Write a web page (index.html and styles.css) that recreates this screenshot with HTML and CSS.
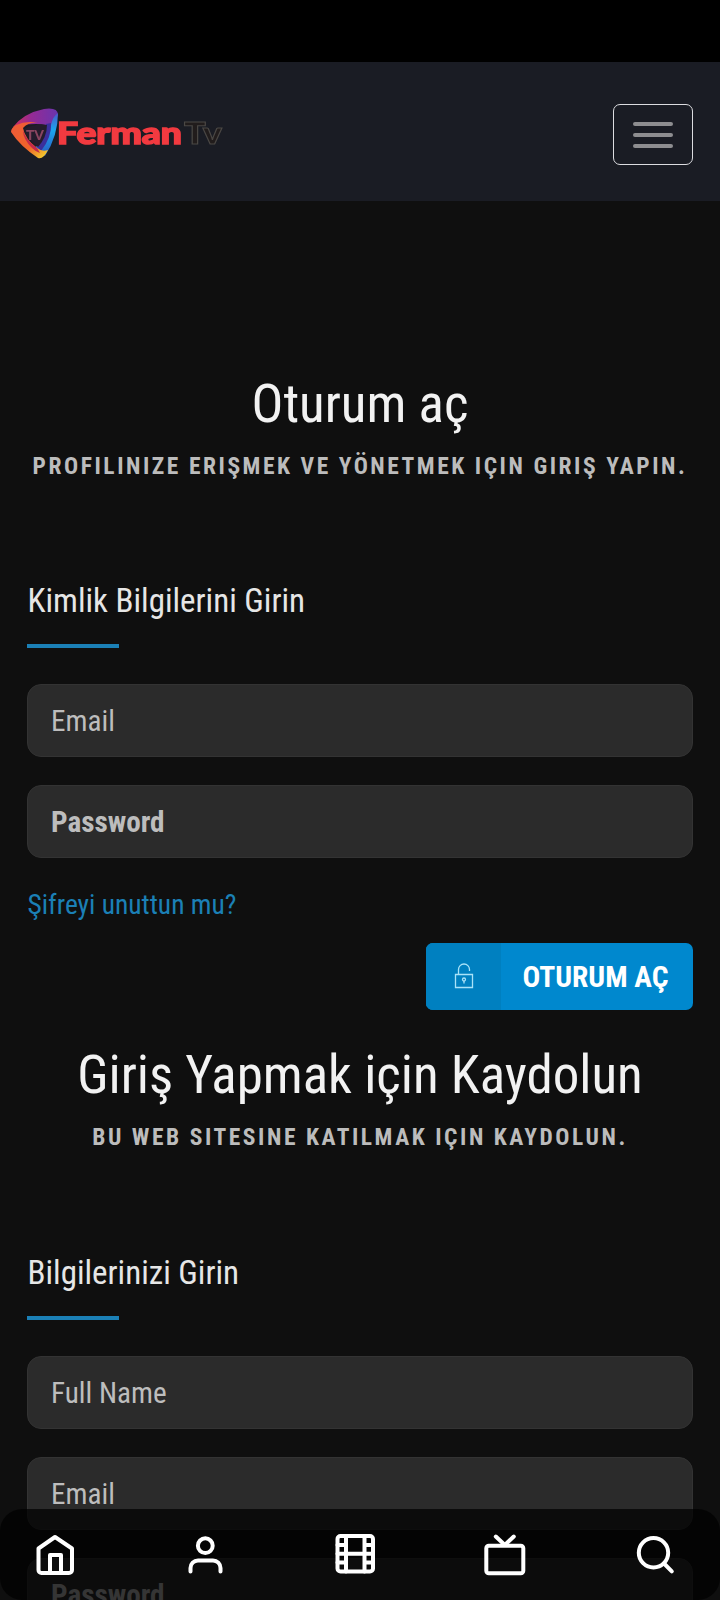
FILE: index.html
```html
<!DOCTYPE html>
<html lang="tr">
<head>
<meta charset="utf-8">
<title>FermanTv</title>
<link rel="stylesheet" href="styles.css">
</head>
<body>
<div class="screen">
  <div class="statusbar"></div>
  <header class="navbar">
    <a class="brand">
      <svg class="logo" width="216" height="56" viewBox="0 0 216 56">
        <defs>
          <linearGradient id="a" x1="0" y1="0" x2="1" y2="0"><stop offset="0" stop-color="#d0305a"/><stop offset=".4" stop-color="#952a94"/><stop offset="1" stop-color="#6a35ae"/></linearGradient>
          <linearGradient id="b" x1="0" y1="0" x2="0" y2="1"><stop offset="0" stop-color="#4b59c8"/><stop offset=".4" stop-color="#1ba5ee"/><stop offset="1" stop-color="#2a58c0"/></linearGradient>
          <linearGradient id="c" x1="0" y1="0" x2="1" y2="1"><stop offset="0" stop-color="#ee5a3a"/><stop offset=".6" stop-color="#f0642a"/><stop offset="1" stop-color="#f2e22e"/></linearGradient>
        </defs>
        <path d="M3 21Q14 7 34 3Q48 1 48 9L42 22Q38 18 26 18Q12 18 3 21Z" fill="url(#a)"/>
        <path d="M48 7Q48 30 35 50Q30 48 24 42Q38 34 41 19Q43 10 48 7Z" fill="url(#b)"/>
        <path d="M41 17Q42 31 31 45L27 41Q36 30 36 18Z" fill="#3b2f9c"/>
        <path d="M28 17Q18 16 13 22Q15 33 27 42Q32 46 38 44Q33 54 28 52Q10 40 1 26Q1 22 6 19Q17 14 28 17Z" fill="url(#c)"/>
        <path d="M13 24Q15 33 27 42L30 47Q26 46 22 42Q13 33 13 24Z" fill="#c32a4a"/>
        <path d="M14 23Q26 17 37 19Q37 31 28 41Q17 33 14 23Z" fill="#241c2c"/>
        <text class="logo-tv" x="16" y="34" textLength="18" lengthAdjust="spacingAndGlyphs">TV</text>
        <text class="logo-name" x="47" y="38" textLength="125" lengthAdjust="spacingAndGlyphs">Ferman</text>
        <text class="logo-suffix" x="174" y="38" textLength="38" lengthAdjust="spacingAndGlyphs">Tv</text>
      </svg>
    </a>
    <button class="toggler"><span></span><span></span><span></span></button>
  </header>
  <main class="content">
    <section class="panel">
      <h1 class="title">Oturum aç</h1>
      <p class="subtitle">PROFILINIZE ERIŞMEK VE YÖNETMEK IÇIN GIRIŞ YAPIN.</p>
      <h2 class="legend">Kimlik Bilgilerini Girin</h2>
      <div class="field">Email</div>
      <div class="field strong">Password</div>
      <div class="actions">
        <a class="forgot">Şifreyi unuttun mu?</a>
        <button class="submit">
          <span class="submit-icon">
            <svg width="20" height="26" viewBox="0 0 20 26" fill="none" stroke="#a9e2f8" stroke-width="1.3"><path d="M1.500 11.500h17v13h-17zM4.500 11V6.500a5.500 5.500 0 0 1 11 0v1.500"/><circle cx="10" cy="16.500" r="1.500"/><path d="M10 18v2.500"/></svg>
          </span>
          <span class="submit-label">OTURUM AÇ</span>
        </button>
      </div>
    </section>
    <section class="panel signup">
      <h1 class="title">Giriş Yapmak için Kaydolun</h1>
      <p class="subtitle">BU WEB SITESINE KATILMAK IÇIN KAYDOLUN.</p>
      <h2 class="legend">Bilgilerinizi Girin</h2>
      <div class="field">Full Name</div>
      <div class="field">Email</div>
      <div class="field strong">Password</div>
    </section>
  </main>
  <nav class="tabbar">
    <svg class="tab" viewBox="0 0 44 44"><path d="M5.500 16.500 22 5l17 11.500V38a3 3 0 0 1-3 3H8.500a3 3 0 0 1-3-3zM17 41V23h11v18"/></svg>
    <svg class="tab" viewBox="0 0 44 44"><circle cx="22.300" cy="13.700" r="7.400"/><path d="M7.500 39.500v-3.500a7.500 7.500 0 0 1 7.500-7.500h15a7.500 7.500 0 0 1 7.500 7.500v3.500"/></svg>
    <svg class="tab" viewBox="0 0 44 44"><rect x="4.500" y="4" width="35.500" height="35.500" rx="3"/><path d="M13 4v35.500M31.500 4v35.500M4.500 21.700H40M4.500 13H13M4.500 30.400H13M31.500 13H40M31.500 30.400H40"/></svg>
    <svg class="tab" viewBox="0 0 44 44"><rect x="3.300" y="13.700" width="37" height="27.500" rx="2.500"/><path d="m12.800 4.500 9 8.500 9-8.500"/></svg>
    <svg class="tab" viewBox="0 0 44 44"><circle cx="20.500" cy="20.800" r="14.700"/><path d="m31 31.500 7.800 7.800"/></svg>
  </nav>
</div>
</body>
</html>
```
FILE: styles.css
```css
* { box-sizing: border-box; margin: 0; }
body { background: #0f0f0f; }
.screen {
  position: relative;
  width: 720px;
  height: 1600px;
  overflow: hidden;
  background: #0f0f0f;
  font-family: "Roboto Condensed", Roboto, sans-serif;
  font-stretch: 75%;
}
.statusbar { height: 62px; background: #000; }
.navbar {
  height: 139px;
  padding: 0 27px 0 10px;
  display: flex;
  align-items: flex-start;
  justify-content: space-between;
  background: #1a1c24;
}
.brand { margin-top: 44px; }
.logo { display: block; filter: blur(.4px); }
.logo text { font-family: Lato, "Open Sans", sans-serif; font-stretch: normal; font-weight: 900; }
.logo-tv { font-size: 14px; fill: #8a4560; }
.logo-name { font-size: 30px; fill: #f23a40; stroke: #f23a40; stroke-width: 1.500; }
.logo-suffix { font-size: 30px; fill: #211c1c; stroke: #4b4845; stroke-width: 1; }
.toggler {
  width: 80px;
  height: 61px;
  margin-top: 42px;
  padding: 0;
  border: 1px solid #dcdce0;
  border-radius: 7px;
  background: none;
  display: flex;
  flex-direction: column;
  align-items: center;
  justify-content: center;
  gap: 7px;
}
.toggler span { width: 40px; height: 4px; border-radius: 2px; background: #8d8d90; }
.content { padding: 168px 27px 0; }
.panel { height: 671px; }
.title {
  height: 70px;
  line-height: 70px;
  text-align: center;
  font-size: 53px;
  font-weight: 400;
  color: #f2f2f2;
}
.subtitle {
  height: 30px;
  margin-top: 12px;
  line-height: 30px;
  text-align: center;
  white-space: nowrap;
  font-size: 23.500px;
  font-weight: 700;
  letter-spacing: 2.540px;
  color: #bcbcbc;
}
.legend {
  height: 67px;
  margin-top: 100px;
  margin-bottom: 36px;
  padding-left: .5px;
  line-height: 40px;
  font-size: 33px;
  font-weight: 400;
  color: #e6e6e6;
}
.legend::after {
  content: "";
  display: block;
  width: 92px;
  height: 4px;
  margin: 23px 0 0 -.5px;
  background: #1b80b6;
}
.signup .legend { margin-top: 101px; }
.field {
  height: 73px;
  margin-bottom: 28px;
  padding-left: 23px;
  line-height: 72px;
  border: 1px solid #333;
  border-radius: 14px;
  background: #2b2b2b;
  font-size: 29.200px;
  color: #bdbdbd;
}
.strong { font-weight: 700; }
.actions { display: flex; flex-direction: column; }
.forgot { height: 40px; padding-left: .5px; line-height: 38px; font-size: 27.500px; color: #1b80b6; }
.submit {
  align-self: flex-end;
  display: flex;
  width: 267px;
  height: 67px;
  margin-top: 17px;
  padding: 0;
  border: 0;
  border-radius: 7px;
  overflow: hidden;
  background: #0088ce;
  color: #fff;
  font: 700 29.500px/68px "Roboto Condensed", Roboto, sans-serif;
  font-stretch: 75%;
}
.submit-icon {
  width: 75px;
  height: 66px;
  display: flex;
  align-items: center;
  justify-content: center;
  background: #0080c0;
  box-shadow: 0 1px #0080c0;
}
.submit-label { flex: 1; padding-right: 3px; text-align: center; white-space: nowrap; }
.tabbar {
  position: absolute;
  left: 0;
  right: 0;
  bottom: 0;
  height: 91px;
  padding: 23px 43px 0 33px;
  display: flex;
  justify-content: space-between;
  border-radius: 22px;
  background: rgba(0, 0, 0, .72);
}
.tab { width: 44px; height: 44px; fill: none; stroke: #fff; stroke-width: 4; stroke-linecap: round; stroke-linejoin: round; }
```
